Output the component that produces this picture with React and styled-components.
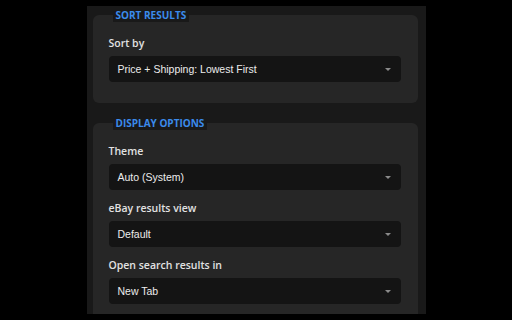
import React from 'react';
import styled, { createGlobalStyle } from 'styled-components';

const GlobalStyle = createGlobalStyle`
  html, body {
    margin: 0;
    padding: 0;
    background: #000;
  }
  * {
    box-sizing: border-box;
  }
`;

const Page = styled.div`
  width: 512px;
  height: 320px;
  background: #000;
  overflow: hidden;
  padding-top: 6px;
`;

const Panel = styled.main`
  width: 339px;
  height: 308px;
  margin: 0 auto;
  background: #191919;
  padding: 9px 8px 0 6px;
  overflow: hidden;
`;

const Card = styled.section`
  position: relative;
  background: #262626;
  border-radius: 6px;
  padding: 20px 17px 21px 16px;
  margin-bottom: 20px;
  display: flex;
  flex-direction: column;
  gap: 10px;
`;

const Legend = styled.h2`
  position: absolute;
  top: -7px;
  left: 20px;
  margin: 0;
  padding: 0 3px;
  background: #191919;
  color: #3b8beb;
  font-family: "Open Sans", "Noto Sans", sans-serif;
  font-size: 10px;
  font-weight: 700;
  line-height: 14px;
  text-transform: uppercase;
`;

const Field = styled.div`
  display: flex;
  flex-direction: column;
  gap: 5px;
`;

const Label = styled.label`
  font-family: "Open Sans", "Noto Sans", sans-serif;
  font-size: 10.5px;
  font-weight: 600;
  line-height: 16px;
  color: #e2e2e2;
`;

const Select = styled.div`
  height: 26px;
  border-radius: 4px;
  background: #141414;
  display: flex;
  align-items: center;
  justify-content: space-between;
  padding: 0 10px 0 9px;
  font-family: "Liberation Sans", Arial, sans-serif;
  font-size: 10.5px;
  color: #ececec;

  &::after {
    content: "";
    width: 0;
    height: 0;
    border-left: 3px solid transparent;
    border-right: 3px solid transparent;
    border-top: 3px solid #8a8a8a;
  }
`;

const sections = [
  {
    title: 'Sort Results',
    fields: [{ label: 'Sort by', value: 'Price + Shipping: Lowest First' }],
  },
  {
    title: 'Display Options',
    fields: [
      { label: 'Theme', value: 'Auto (System)' },
      { label: 'eBay results view', value: 'Default' },
      { label: 'Open search results in', value: 'New Tab' },
    ],
  },
];

export default function App() {
  return (
    <>
      <GlobalStyle />
      <Page>
        <Panel>
          {sections.map((section) => (
            <Card key={section.title}>
              <Legend>{section.title}</Legend>
              {section.fields.map((field) => (
                <Field key={field.label}>
                  <Label>{field.label}</Label>
                  <Select>{field.value}</Select>
                </Field>
              ))}
            </Card>
          ))}
        </Panel>
      </Page>
    </>
  );
}
